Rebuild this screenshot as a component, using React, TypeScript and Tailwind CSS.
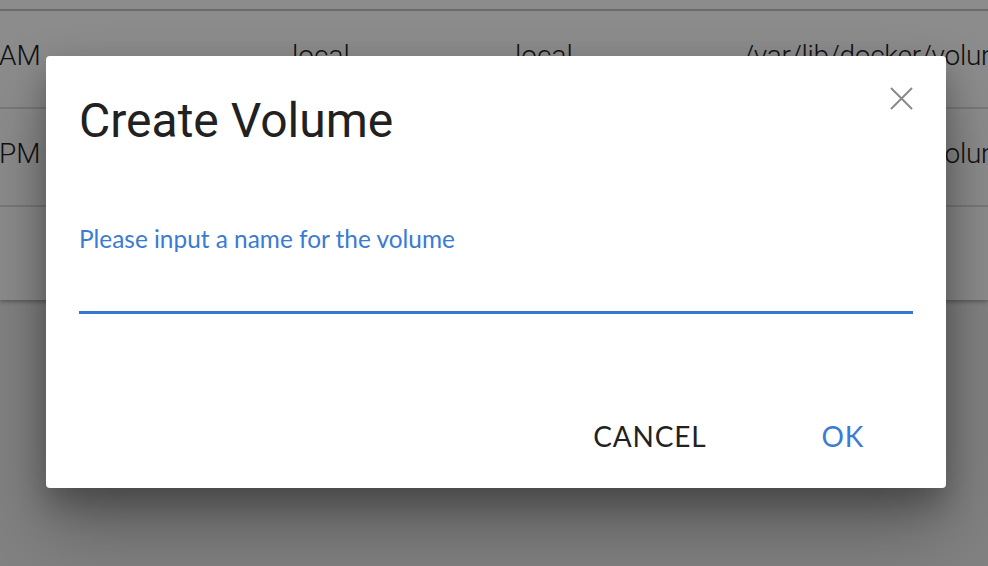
import React from 'react'

const rows = [
  { time: 'AM', driver: 'local', scope: 'local', mount: '/var/lib/docker/volumes' },
  { time: 'PM', driver: 'local', scope: 'local', mount: '/var/lib/docker/volumes' },
]

function VolumeTable() {
  return (
    <div className="bg-white shadow-[0_2px_4px_rgba(0,0,0,0.3)] pt-[9px] overflow-hidden">
      <div className="border-t-2 border-[#c4c4c4]" />
      {rows.map((r) => (
        <div
          key={r.time}
          className="flex items-center h-[98px] pb-[6px] border-b-2 border-[#dcdcdc] whitespace-nowrap text-[28px] font-light text-[#1f1f1f]"
          style={{ fontFamily: 'Roboto, sans-serif' }}
        >
          <div className="w-[293px] shrink-0 -ml-[1px]">{r.time}</div>
          <div className="w-[223px] shrink-0">{r.driver}</div>
          <div className="w-[228px] shrink-0">{r.scope}</div>
          <div className="shrink-0 tracking-[-0.3px]">{r.mount}</div>
        </div>
      ))}
      <div className="h-[93px]" />
    </div>
  )
}

export default function App() {
  return (
    <div className="relative w-[988px] h-[566px] overflow-hidden bg-[#ededed]">
      <VolumeTable />

      {/* backdrop */}
      <div className="absolute inset-0 bg-black/45" />

      {/* dialog */}
      <div className="absolute left-[46px] top-[56px] w-[900px] h-[432px] bg-white rounded-[4px] shadow-[0_40px_70px_rgba(0,0,0,0.3),0_14px_30px_rgba(0,0,0,0.25)] flex flex-col">
        <div className="flex items-start justify-between pl-[33px] pr-[33px] pt-[35px]">
          <h2
            className="text-[48px] leading-[60px] text-[#212121]"
            style={{ fontFamily: 'Roboto, sans-serif' }}
          >
            Create Volume
          </h2>
          <button className="mt-[-4px] w-[23px] h-[23px] text-[#8a8a8a]">
            <svg viewBox="0 0 23 23" width="23" height="23" fill="none" stroke="currentColor" strokeWidth="2">
              <path d="M1 1 L22 22 M22 1 L1 22" />
            </svg>
          </button>
        </div>

        <div className="px-[33px] mt-[73px]" style={{ fontFamily: 'Lato, sans-serif' }}>
          <label className="block text-[24.4px] leading-[30px] text-[#3a7bd3]">
            Please input a name for the volume
          </label>
          <input className="block w-full h-[60px] outline-none border-b-[3px] border-[#3676cf] bg-transparent" />
        </div>

        <div
          className="mt-auto mb-[36px] flex justify-end items-center gap-[115px] pr-[82px]"
          style={{ fontFamily: 'Lato, sans-serif' }}
        >
          <button className="text-[28px] leading-[32px] tracking-[0.8px] text-[#222222]">CANCEL</button>
          <button className="text-[28px] leading-[32px] tracking-[0.8px] text-[#3a7bd3]">OK</button>
        </div>
      </div>
    </div>
  )
}
